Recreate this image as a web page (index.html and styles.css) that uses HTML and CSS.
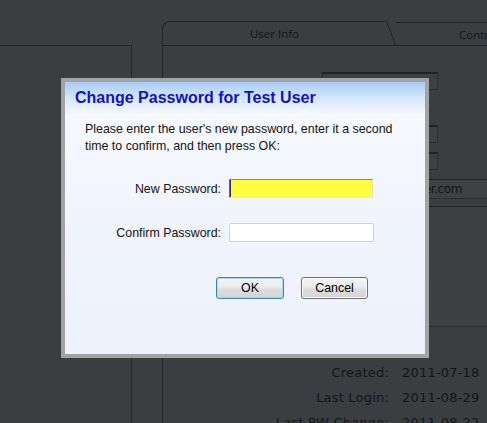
FILE: index.html
```html
<!DOCTYPE html>
<html lang="en">
<head>
<meta charset="utf-8">
<title>Change Password</title>
<link rel="stylesheet" href="styles.css">
</head>
<body>
<div class="screen">
  <div class="sidebar"><div class="sidebar-panel"></div></div>
  <div class="main">
    <div class="tabs">
      <div class="tab tab-active">User Info</div>
      <svg class="tab-slant" width="10" height="24" viewBox="0 0 10 24"><path d="M0.5 0 L9.5 24" stroke="#232528" stroke-width="1" fill="none"/></svg>
      <div class="tab tab-next">Contr</div>
    </div>
    <div class="tab-body">
      <div class="field field-a"></div>
      <div class="field field-b"></div>
      <div class="field field-c"></div>
      <div class="field-wide">test@testuser.com</div>
      <div class="notes"></div>
      <div class="info">
        <span class="info-label">Created:</span><span class="info-value">2011-07-18</span>
        <span class="info-label">Last Login:</span><span class="info-value">2011-08-29</span>
        <span class="info-label">Last PW Change:</span><span class="info-value">2011-08-22</span>
      </div>
    </div>
  </div>

  <div class="dialog">
    <div class="dialog-title">Change Password for Test User</div>
    <p class="dialog-text">Please enter the user's new password, enter it a second<br>time to confirm, and then press OK:</p>
    <div class="form-row row-first">
      <label class="form-label" for="pw1">New Password:</label>
      <input class="form-input input-new" id="pw1" type="password">
    </div>
    <div class="form-row row-second">
      <label class="form-label" for="pw2">Confirm Password:</label>
      <input class="form-input input-confirm" id="pw2" type="password">
    </div>
    <div class="buttons">
      <button class="btn btn-ok" type="button">OK</button>
      <button class="btn btn-cancel" type="button">Cancel</button>
    </div>
  </div>
</div>
</body>
</html>
```
FILE: styles.css
```css
html, body {
  margin: 0;
  padding: 0;
}
body {
  background: #3b3e41;
  width: 487px;
  height: 423px;
  overflow: hidden;
}
.screen {
  position: relative;
  display: flex;
  width: 487px;
  height: 423px;
  overflow: hidden;
  background: #3b3e41;
  font-family: "DejaVu Sans", Verdana, sans-serif;
  color: #151515;
}

/* left panel */
.sidebar {
  width: 132px;
  flex: none;
  padding-top: 45px;
  box-sizing: border-box;
  display: flex;
  flex-direction: column;
}
.sidebar-panel {
  flex: 1;
  border-top: 1px solid #232528;
  border-right: 1px solid #232528;
}

/* right tabbed panel */
.main {
  flex: 1;
  min-width: 0;
  margin-left: 30px;
  display: flex;
  flex-direction: column;
}
.tabs {
  display: flex;
  height: 24px;
  margin-top: 21px;
  flex: none;
}
.tab {
  font-family: "Open Sans", "DejaVu Sans", sans-serif;
  font-size: 11.5px;
  line-height: 24px;
  color: #151515;
  border-top: 1px solid #232528;
  box-sizing: border-box;
  white-space: nowrap;
}
.tab-active {
  width: 224px;
  flex: none;
  border-left: 1px solid #232528;
  border-top-left-radius: 8px;
  text-align: center;
}
.tab-slant {
  display: block;
  flex: none;
}
.tab-next {
  flex: 1;
  margin-top: 1px;
  line-height: 23px;
  padding-left: 63px;
  overflow: hidden;
}
.tab-body {
  flex: 1;
  border-top: 1px solid #232528;
  border-left: 1px solid #232528;
  display: flex;
  flex-direction: column;
}
.field {
  margin-left: 159px;
  width: 116px;
  height: 18px;
  box-sizing: border-box;
  border: 1px solid #2c2e31;
  border-top: 2px solid #1f2123;
  background: #3d4043;
  flex: none;
}
.field-a { margin-top: 26px; }
.field-b { margin-top: 35px; }
.field-c { margin-top: 9px; }
.field-wide {
  margin-top: 9px;
  margin-left: 159px;
  height: 20px;
  box-sizing: border-box;
  border-top: 1px solid #1f2123;
  border-bottom: 1px solid #2c2e31;
  background: #3e4144;
  font-size: 12px;
  letter-spacing: -0.4px;
  line-height: 18px;
  text-align: right;
  padding-right: 25px;
  white-space: nowrap;
  overflow: hidden;
  flex: none;
}
.notes {
  margin-top: 7px;
  margin-left: 159px;
  height: 121px;
  box-sizing: border-box;
  border-top: 1px solid #26282b;
  border-bottom: 1px solid #2a2c2f;
  background: #3d4043;
  flex: none;
}
.info {
  margin-top: 33px;
  display: grid;
  grid-template-columns: 226px auto;
  column-gap: 13px;
  font-size: 13px;
  line-height: 25px;
  letter-spacing: 0.2px;
  white-space: nowrap;
}
.info-label { text-align: right; }

/* modal dialog */
.dialog {
  position: absolute;
  left: 61px;
  top: 78px;
  width: 368px;
  height: 280px;
  box-sizing: border-box;
  border: 4px solid #a3a3a3;
  background: linear-gradient(180deg, #a6ccf7 0px, #d2e5fb 15px, #f6f9fe 32px, #f2f5fd 110px, #edf1fc 100%);
  font-family: "Liberation Sans", Arial, sans-serif;
  color: #141414;
}
.dialog-title {
  padding: 6px 10px 0;
  font-size: 16px;
  font-weight: bold;
  line-height: 20px;
  color: #1212c8;
}
.dialog-text {
  margin: 13px 0 0 20px;
  font-size: 12.4px;
  line-height: 17px;
}
.form-row {
  display: flex;
  align-items: center;
}
.row-first { margin-top: 24px; }
.row-second { margin-top: 25px; }
.form-label {
  width: 156px;
  margin-right: 8px;
  text-align: right;
  font-size: 12.4px;
}
.form-input {
  height: 19px;
  box-sizing: border-box;
  margin: 0;
  padding: 0 3px;
  outline: none;
  font-family: inherit;
}
.input-new {
  width: 144px;
  background: #ffff40;
  border: 1px solid;
  border-color: #8a8a80 #e4e4a8 #ececb8 #6a6a70;
  box-shadow: inset 1px 0 0 #2e2e5c;
}
.input-confirm {
  width: 145px;
  background: #ffffff;
  border: 1px solid #cfd3d8;
  border-radius: 2px;
}
.buttons {
  display: flex;
  gap: 17px;
  margin: 35px 0 0 151px;
}
.btn {
  height: 22px;
  box-sizing: border-box;
  padding: 0;
  border-radius: 3px;
  font-family: "Liberation Sans", Arial, sans-serif;
  font-size: 12.4px;
  color: #000;
  background: linear-gradient(180deg, #f6f6f6 0%, #ececec 45%, #dedede 55%, #d4d4d4 100%);
}
.btn-ok {
  width: 68px;
  border: 1px solid #3c86b8;
  box-shadow: inset 0 0 0 1px #a6d8f2;
}
.btn-cancel {
  width: 67px;
  border: 1px solid #707070;
  box-shadow: inset 0 0 0 1px #fafafa;
}
```
